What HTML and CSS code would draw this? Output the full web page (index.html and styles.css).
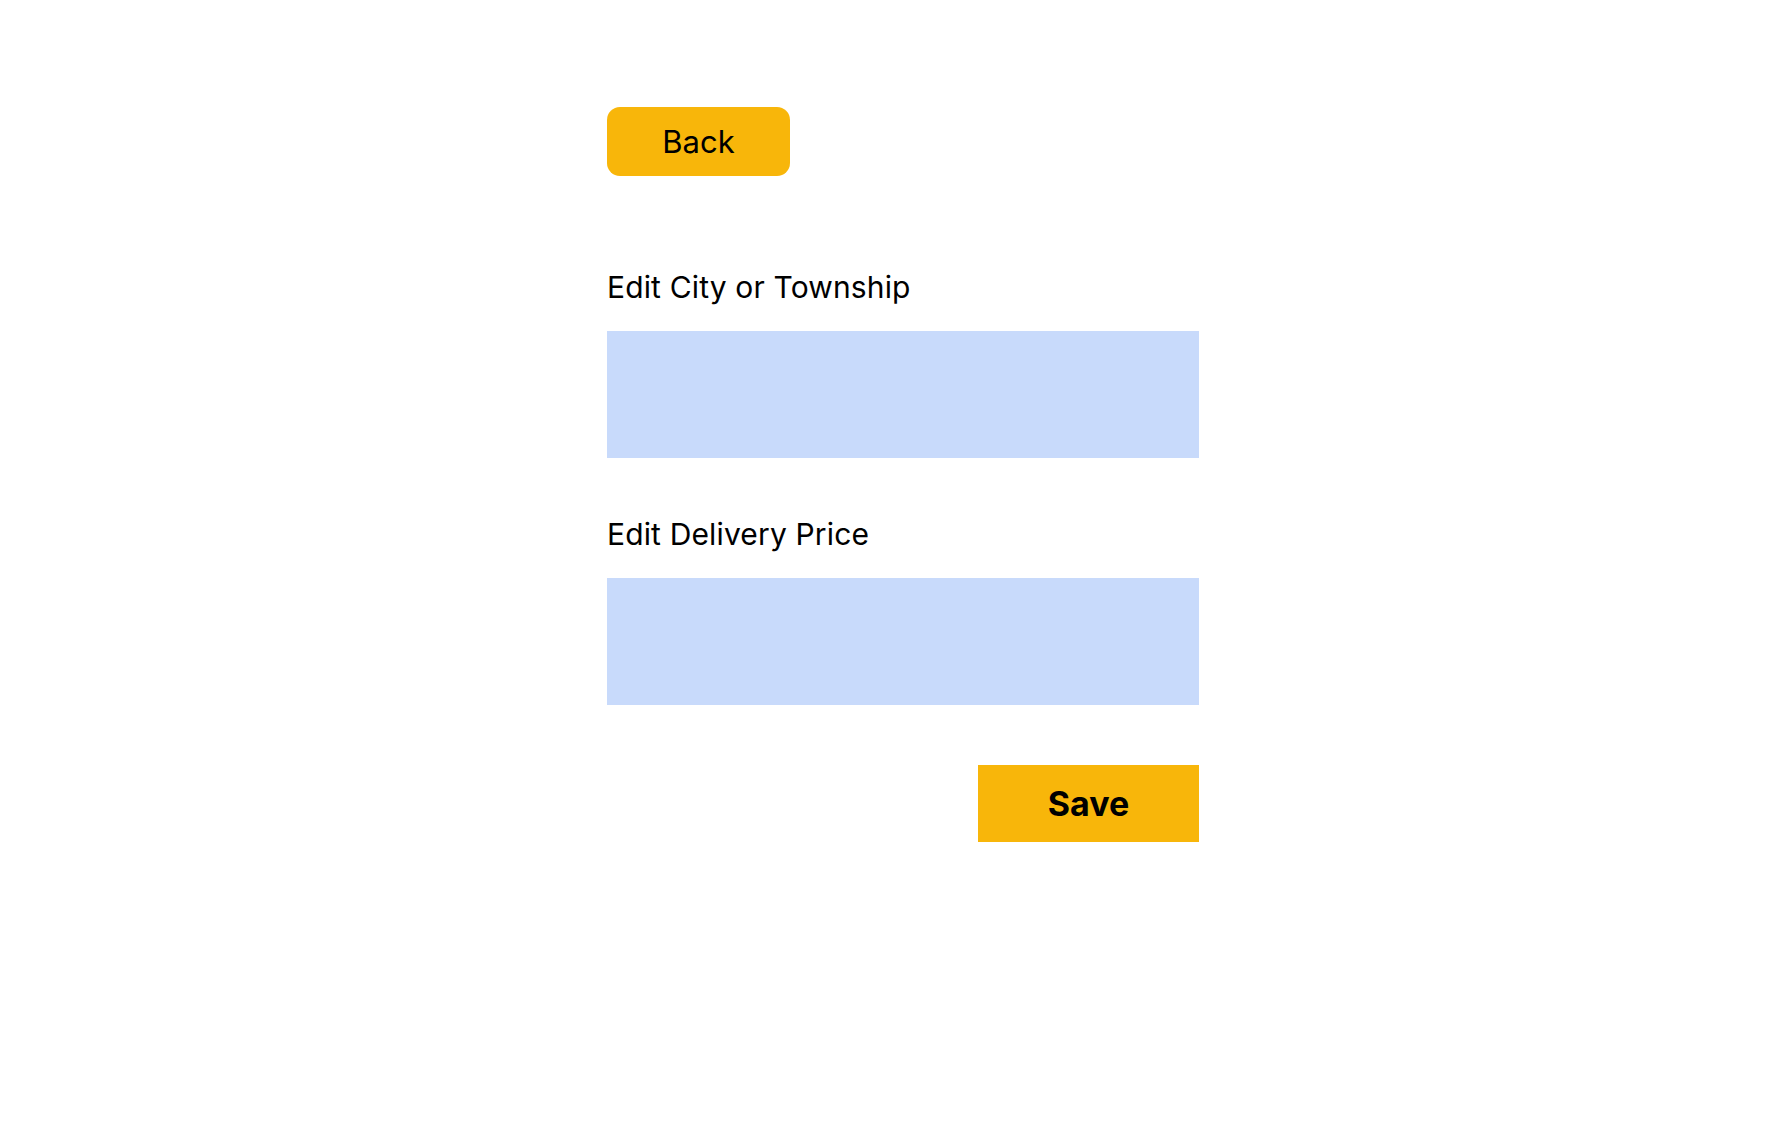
FILE: index.html
```html
<!DOCTYPE html>
<html lang="en">
<head>
<meta charset="utf-8">
<title>Edit City</title>
<link rel="stylesheet" href="styles.css">
</head>
<body>
<main class="page">
  <button class="back-btn" type="button">Back</button>
  <form class="edit-form">
    <label class="field-label" for="city">Edit City or Township</label>
    <input class="field-input" id="city" type="text">
    <label class="field-label second" for="price">Edit Delivery Price</label>
    <input class="field-input" id="price" type="text">
    <div class="actions">
      <button class="save-btn" type="button">Save</button>
    </div>
  </form>
</main>
</body>
</html>
```

FILE: styles.css
```css
html, body {
  margin: 0;
  padding: 0;
  background: #ffffff;
}

body {
  font-family: "Inter", "Noto Sans", sans-serif;
  color: #000000;
}

.page {
  width: 592px;
  margin-left: 607px;
  padding-top: 107px;
  display: flex;
  flex-direction: column;
  align-items: flex-start;
}

.back-btn {
  width: 183px;
  height: 69px;
  border: none;
  border-radius: 13px;
  background: #f8b60a;
  font-family: "Inter", sans-serif;
  font-size: 31px;
  font-weight: 400;
  color: #000;
  padding: 0;
  cursor: pointer;
}

.edit-form {
  width: 100%;
  display: flex;
  flex-direction: column;
  margin-top: 93px;
}

.field-label {
  font-size: 30px;
  line-height: 36px;
  font-weight: 400;
  letter-spacing: 0.15px;
}

.field-label.second {
  margin-top: 58px;
}

.field-input {
  margin-top: 26px;
  width: 100%;
  height: 127px;
  box-sizing: border-box;
  border: none;
  background: #c8dafb;
  outline: none;
  padding: 0;
}

.actions {
  display: flex;
  justify-content: flex-end;
  margin-top: 60px;
}

.save-btn {
  width: 221px;
  height: 77px;
  border: none;
  border-radius: 0;
  background: #f8b60a;
  font-family: "Inter", sans-serif;
  font-size: 34px;
  font-weight: 700;
  color: #000;
  padding: 0;
  cursor: pointer;
}
```
